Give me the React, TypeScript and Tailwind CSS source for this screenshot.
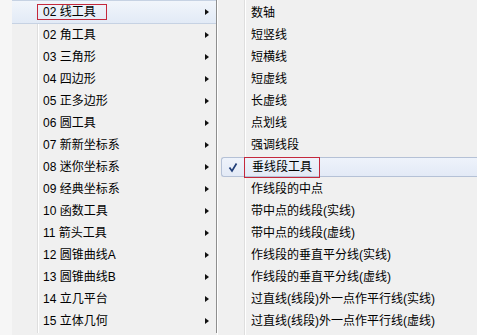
const leftItems = [
  "02 线工具",
  "02 角工具",
  "03 三角形",
  "04 四边形",
  "05 正多边形",
  "06 圆工具",
  "07 新新坐标系",
  "08 迷你坐标系",
  "09 经典坐标系",
  "10 函数工具",
  "11 箭头工具",
  "12 圆锥曲线A",
  "13 圆锥曲线B",
  "14 立几平台",
  "15 立体几何",
];

const rightItems = [
  "数轴",
  "短竖线",
  "短横线",
  "短虚线",
  "长虚线",
  "点划线",
  "强调线段",
  "垂线段工具",
  "作线段的中点",
  "带中点的线段(实线)",
  "带中点的线段(虚线)",
  "作线段的垂直平分线(实线)",
  "作线段的垂直平分线(虚线)",
  "过直线(线段)外一点作平行线(实线)",
  "过直线(线段)外一点作平行线(虚线)",
];

function Arrow() {
  return <span className="w-0 h-0 border-y-[3.5px] border-y-transparent border-l-[4px] border-l-[#111]" />;
}

function Check() {
  return (
    <svg width="10" height="11" viewBox="0 0 10 11" className="shrink-0">
      <path d="M1.5 5.5 L4 9 L8.5 1.5" fill="none" stroke="#1f3d78" strokeWidth="1.7" />
    </svg>
  );
}

export default function App() {
  return (
    <div className="flex w-[477px] h-[335px] bg-[#f0f0f0] text-[12px] text-black font-['Liberation_Sans','Noto_Sans_CJK_SC',sans-serif] overflow-hidden">
      {/* left edge */}
      <div className="w-[12px] bg-[#f6f6f6]" />

      {/* Left menu */}
      <div className="w-[205px] h-[333px] border-r border-[#8e8e8e] bg-[linear-gradient(to_right,transparent_25px,#dedede_25px,#dedede_26px,#fff_26px,#fff_27px,transparent_27px)]">
        {leftItems.map((item, i) =>
          i === 0 ? (
            <div
              key={i}
              className="h-[24px] flex items-center justify-between pl-[25px] pr-[7px] border-y border-[#c6d2e3] bg-[linear-gradient(to_bottom,#f1f5fb,#e2eaf6)]"
            >
              <span className="h-[16px] flex items-center pl-[5px] pr-[10px] border border-[#c4283c]">{item}</span>
              <Arrow />
            </div>
          ) : (
            <div key={i} className="h-[22px] flex items-center justify-between pl-[31px] pr-[7px]">
              <span>{item}</span>
              <Arrow />
            </div>
          )
        )}
      </div>

      {/* Right menu */}
      <div className="flex-1 pt-[2px] border-l border-white bg-[linear-gradient(to_right,transparent_26px,#dedede_26px,#dedede_27px,#fff_27px,#fff_28px,transparent_28px)]">
        {rightItems.map((item, i) =>
          i === 7 ? (
            <div key={i} className="h-[22px] py-[1px] pl-[3px]">
              <div className="h-[20px] flex items-center rounded-l-[3px] border-y border-l border-[#b5c1d6] bg-[linear-gradient(to_bottom,#eef3fb,#e3eaf6)]">
                <div className="w-[20px] flex justify-center pl-[2px]">
                  <Check />
                </div>
                <span className="h-[21px] flex items-center ml-[2px] px-[7px] border border-[#c4283c]">{item}</span>
              </div>
            </div>
          ) : (
            <div key={i} className="h-[22px] flex items-center pl-[33px]">
              {item}
            </div>
          )
        )}
      </div>
    </div>
  );
}
